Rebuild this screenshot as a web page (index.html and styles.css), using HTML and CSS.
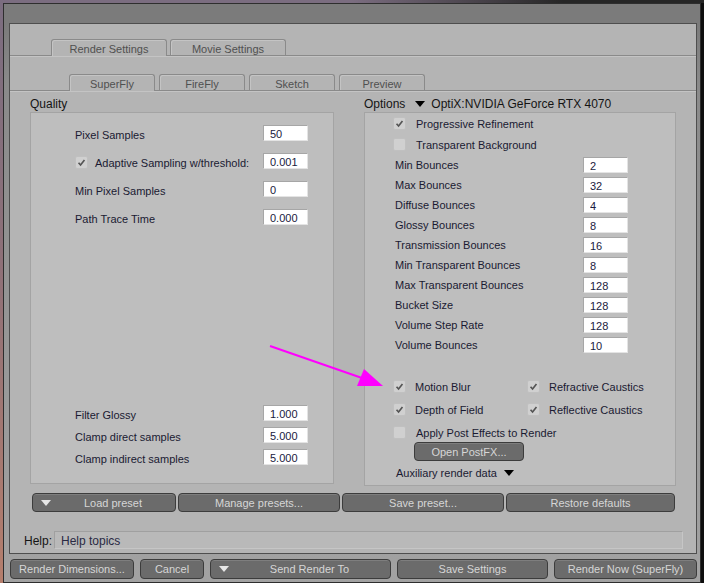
FILE: index.html
```html
<!DOCTYPE html>
<html lang="en">
  <head>
    <meta charset="UTF-8" />
    <meta name="viewport" content="width=device-width, initial-scale=1.0" />
    <title>Render Settings</title>
    <link rel="stylesheet" href="styles.css">
  </head>
  <body>
    <div class="window">
      <!-- Main Panel -->
      <div class="panel">
        <div class="tabs tabs-main">
          <div class="tab active">Render Settings</div>
          <div class="tab">Movie Settings</div>
        </div>
        <div class="tabs tabs-engine">
          <div class="tab active">SuperFly</div>
          <div class="tab">FireFly</div>
          <div class="tab">Sketch</div>
          <div class="tab">Preview</div>
        </div>

        <div class="columns">
          <!-- Quality -->
          <section class="col col-quality">
            <h2 class="group-title">Quality</h2>
            <div class="group quality-box">
              <div class="field-list quality-top">
                <div class="field">
                  <span>Pixel Samples</span>
                  <input class="num" value="50" />
                </div>
                <div class="field">
                  <span class="check">
                    <span class="box on"><svg viewBox="0 0 13 13"><path d="M3 6.8 5.4 9.4 10 3.6" /></svg></span>
                    Adaptive Sampling w/threshold:
                  </span>
                  <input class="num" value="0.001" />
                </div>
                <div class="field">
                  <span>Min Pixel Samples</span>
                  <input class="num" value="0" />
                </div>
                <div class="field">
                  <span>Path Trace Time</span>
                  <input class="num" value="0.000" />
                </div>
              </div>
              <div class="field-list quality-bottom">
                <div class="field">
                  <span>Filter Glossy</span>
                  <input class="num" value="1.000" />
                </div>
                <div class="field">
                  <span>Clamp direct samples</span>
                  <input class="num" value="5.000" />
                </div>
                <div class="field">
                  <span>Clamp indirect samples</span>
                  <input class="num" value="5.000" />
                </div>
              </div>
            </div>
          </section>

          <!-- Options -->
          <section class="col col-options">
            <h2 class="group-title">Options <span class="tri"></span> OptiX:NVIDIA GeForce RTX 4070</h2>
            <div class="group options-box">
              <div class="option-checks">
                <span class="check">
                  <span class="box on"><svg viewBox="0 0 13 13"><path d="M3 6.8 5.4 9.4 10 3.6" /></svg></span>
                  Progressive Refinement
                </span>
                <span class="check">
                  <span class="box"></span>
                  Transparent Background
                </span>
              </div>
              <div class="field-list bounce-list">
                <div class="field"><span>Min Bounces</span><input class="num" value="2" /></div>
                <div class="field"><span>Max Bounces</span><input class="num" value="32" /></div>
                <div class="field"><span>Diffuse Bounces</span><input class="num" value="4" /></div>
                <div class="field"><span>Glossy Bounces</span><input class="num" value="8" /></div>
                <div class="field"><span>Transmission Bounces</span><input class="num" value="16" /></div>
                <div class="field"><span>Min Transparent Bounces</span><input class="num" value="8" /></div>
                <div class="field"><span>Max Transparent Bounces</span><input class="num" value="128" /></div>
                <div class="field"><span>Bucket Size</span><input class="num" value="128" /></div>
                <div class="field"><span>Volume Step Rate</span><input class="num" value="128" /></div>
                <div class="field"><span>Volume Bounces</span><input class="num" value="10" /></div>
              </div>
              <div class="effect-grid">
                <span class="check">
                  <span class="box on"><svg viewBox="0 0 13 13"><path d="M3 6.8 5.4 9.4 10 3.6" /></svg></span>
                  Motion Blur
                </span>
                <span class="check">
                  <span class="box on"><svg viewBox="0 0 13 13"><path d="M3 6.8 5.4 9.4 10 3.6" /></svg></span>
                  Refractive Caustics
                </span>
                <span class="check">
                  <span class="box on"><svg viewBox="0 0 13 13"><path d="M3 6.8 5.4 9.4 10 3.6" /></svg></span>
                  Depth of Field
                </span>
                <span class="check">
                  <span class="box on"><svg viewBox="0 0 13 13"><path d="M3 6.8 5.4 9.4 10 3.6" /></svg></span>
                  Reflective Caustics
                </span>
              </div>
              <span class="check post-check">
                <span class="box"></span>
                Apply Post Effects to Render
              </span>
              <div class="btn postfx">Open PostFX...</div>
              <div class="aux">Auxiliary render data <span class="tri"></span></div>
            </div>
          </section>
        </div>

        <!-- Preset Buttons -->
        <div class="presets">
          <div class="btn btn-load"><span class="tri tri-light"></span><span class="btn-label">Load preset</span></div>
          <div class="btn btn-manage">Manage presets...</div>
          <div class="btn btn-save">Save preset...</div>
          <div class="btn btn-restore">Restore defaults</div>
        </div>

        <!-- Help -->
        <div class="help-row">
          <span class="help-label">Help:</span>
          <div class="help-field">Help topics</div>
        </div>
      </div>

      <!-- Bottom Actions -->
      <div class="actions">
        <div class="btn act-dims">Render Dimensions...</div>
        <div class="btn act-cancel">Cancel</div>
        <div class="btn act-send"><span class="tri tri-light"></span><span class="btn-label">Send Render To</span></div>
        <div class="btn act-save">Save Settings</div>
        <div class="btn act-render">Render Now (SuperFly)</div>
      </div>
    </div>

    <!-- Annotation arrow -->
    <svg class="arrow" viewBox="0 0 704 583">
      <line x1="270" y1="346" x2="362" y2="378" />
      <polygon points="383,386 357,386 364,369" />
    </svg>
  </body>
</html>
```

FILE: styles.css
```css
/* Global Styles */
* {
  box-sizing: border-box;
}
body {
  margin: 0;
  position: relative;
  width: 704px;
  height: 583px;
  overflow: hidden;
  font-family: "Liberation Sans", Arial, sans-serif;
  font-size: 11px;
  color: #1a1a32;
  background:
    linear-gradient(#7b6d80, #8e7078 45%, #b57e6c) 0 0 / 3px 100% no-repeat,
    linear-gradient(to right, #7b6d80 50%, #262626 80%) 0 0 / 100% 3px no-repeat,
    #0e0e0e;
}

/* Window Frame */
.window {
  margin: 3px 0 0 3px;
  width: 698px;
  height: 580px;
  border: 1px solid #2e2e2e;
  padding: 19px 3px 0 5px;
  background: linear-gradient(#7b7b7b 0, #7b7b7b 20px, #8a8a8a 80px, #a2a2a2);
}
.panel {
  width: 688px;
  height: 531px;
  border: 1px solid #4e4e4e;
  background: #b4b4b4;
}

/* Tabs */
.tabs {
  display: flex;
  align-items: flex-end;
  height: 17px;
  border-bottom: 1px solid #8a8a8a;
  box-shadow: 0 1px 0 #c4c4c4;
}
.tabs-main {
  margin-top: 15px;
  padding-left: 41px;
  gap: 3px;
}
.tabs-engine {
  margin-top: 18px;
  padding-left: 59px;
  gap: 4px;
}
.tab {
  height: 16px;
  padding-top: 2px;
  border: 1px solid #8a8a8a;
  border-bottom: 0;
  border-radius: 3px 3px 0 0;
  box-shadow: inset 1px 1px 0 #c4c4c4;
  text-align: center;
  line-height: 14px;
  color: #505050;
}
.tab.active {
  height: 17px;
  margin-bottom: -1px;
  background: #b4b4b4;
}
.tabs-main .tab {
  width: 116px;
}
.tabs-engine .tab {
  width: 86px;
}

/* Columns */
.columns {
  display: flex;
  align-items: flex-start;
  gap: 30px;
  margin-top: 5px;
  padding-left: 20px;
}
.col-quality {
  width: 304px;
}
.col-options {
  width: 312px;
}
.group-title {
  display: flex;
  align-items: center;
  height: 16px;
  margin: 0;
  font-size: 12px;
  font-weight: normal;
  color: #141414;
}
.group-title .tri {
  margin: 0 6px 0 10px;
}
.group {
  border: 1px solid #a4a4a4;
  background: #bebebe;
}

/* Fields */
.field-list {
  display: flex;
  flex-direction: column;
}
.field {
  display: flex;
  align-items: center;
  justify-content: space-between;
  height: 16px;
}
.num {
  width: 45px;
  height: 16px;
  margin: 0;
  padding: 1px 0 0 6px;
  border: 1px solid;
  border-color: #a6a6a6 #e4e4e4 #e4e4e4 #a6a6a6;
  background: #fff;
  font: 11px "Liberation Sans", Arial, sans-serif;
  color: #1a1a40;
}
.check {
  display: flex;
  align-items: center;
  gap: 9px;
  height: 13px;
}
.box {
  width: 13px;
  height: 13px;
  flex: none;
  border: 1px solid #c0c0c0;
  border-radius: 2px;
  background: #d0d0d0;
}
.box svg {
  display: block;
  width: 11px;
  height: 11px;
}
.box path {
  fill: none;
  stroke: #545454;
  stroke-width: 2;
}

/* Quality Box */
.quality-box {
  display: flex;
  flex-direction: column;
  justify-content: space-between;
  height: 372px;
  padding: 12px 25px 18px 44px;
}
.quality-box .field > span {
  margin-top: 3px;
}
.quality-top {
  gap: 12px;
}
.quality-top .check {
  gap: 7px;
}
.quality-bottom {
  gap: 6px;
}

/* Options Box */
.options-box {
  height: 374px;
  padding: 4px 0 0 28px;
}
.option-checks {
  display: flex;
  flex-direction: column;
  gap: 8px;
}
.option-checks .check {
  gap: 10px;
}
.bounce-list {
  width: 233px;
  margin: 6px 0 0 2px;
  gap: 4px;
}
.effect-grid {
  display: grid;
  grid-template-columns: 134px auto;
  row-gap: 10px;
  margin-top: 27px;
}
.post-check {
  margin-top: 10px;
  gap: 10px;
}
.postfx {
  width: 110px;
  margin: 3px 0 0 21px;
}
.aux {
  display: flex;
  align-items: center;
  height: 14px;
  margin: 5px 0 0 3px;
}
.aux .tri {
  margin-left: 7px;
}

/* Triangles */
.tri {
  width: 0;
  height: 0;
  border-left: 5px solid transparent;
  border-right: 5px solid transparent;
  border-top: 6px solid #000;
}
.tri-light {
  border-top-color: #e6e6e6;
  flex: none;
}

/* Buttons */
.btn {
  display: flex;
  align-items: center;
  justify-content: center;
  height: 19px;
  border: 1px solid #3c3c3c;
  border-radius: 4px;
  background: #6b6b6b;
  box-shadow: inset 0 1px 0 #7e7e7e;
  color: #d6d6d6;
  white-space: nowrap;
}
.btn-load,
.act-send {
  justify-content: flex-start;
  padding-left: 8px;
}
.btn-label {
  flex: 1;
  text-align: center;
}
.presets {
  display: flex;
  gap: 2px;
  margin-top: 7px;
  padding-left: 22px;
}
.btn-load {
  width: 144px;
}
.btn-manage,
.btn-save {
  width: 162px;
}
.btn-restore {
  width: 169px;
}

/* Help */
.help-row {
  display: flex;
  align-items: center;
  margin-top: 19px;
  padding-left: 14px;
}
.help-label {
  width: 30px;
  padding-top: 2px;
  font-size: 12px;
  color: #141414;
}
.help-field {
  width: 629px;
  height: 18px;
  padding: 1px 0 0 6px;
  border: 1px solid;
  border-color: #a0a0a0 #c6c6c6 #c6c6c6 #a0a0a0;
  background: #b9b9b9;
  font-size: 12px;
  line-height: 16px;
  color: #2a2a44;
}

/* Bottom Actions */
.actions {
  display: flex;
  gap: 6px;
  margin-top: 5px;
  padding-left: 1px;
}
.actions .btn {
  height: 20px;
}
.act-dims {
  width: 124px;
}
.act-cancel {
  width: 64px;
}
.act-send {
  width: 181px;
}
.act-save {
  width: 151px;
}
.act-render {
  width: 143px;
}

/* Annotation */
.arrow {
  position: absolute;
  left: 0;
  top: 0;
  width: 704px;
  height: 583px;
  pointer-events: none;
}
.arrow line {
  stroke: #ff00ff;
  stroke-width: 2;
}
.arrow polygon {
  fill: #ff00ff;
}
```
